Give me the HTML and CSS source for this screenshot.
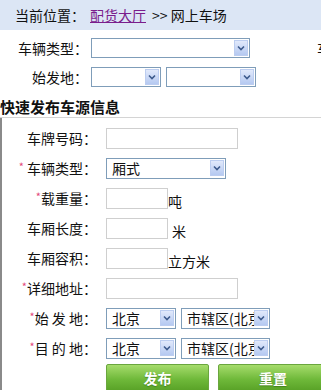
FILE: index.html
```html
<!DOCTYPE html>
<html lang="zh-CN">
<head>
  <meta charset="UTF-8" />
  <meta name="viewport" content="width=device-width, initial-scale=1" />
  <title>网上车场</title>
  <link rel="stylesheet" href="styles.css">
</head>
<body>

  <div class="crumb">
    当前位置：<a href="#">配货大厅</a><span class="sep">&gt;&gt; 网上车场</span>
  </div>

  <!-- 搜索条件 -->
  <div class="search">
    <div class="srow">
      <span class="slabel">车辆类型：</span>
      <div class="sel w159"><span class="val"></span><span class="arr"><svg viewBox="0 0 8 6" width="8" height="6"><path d="M1 1.5 L4 4.5 L7 1.5" fill="none" stroke="#3d5a8c" stroke-width="1.6"/></svg></span></div>
      <span class="slabel more">车长：</span>
    </div>
    <div class="srow">
      <span class="slabel">始发地：</span>
      <div class="sel w70"><span class="val"></span><span class="arr"><svg viewBox="0 0 8 6" width="8" height="6"><path d="M1 1.5 L4 4.5 L7 1.5" fill="none" stroke="#3d5a8c" stroke-width="1.6"/></svg></span></div>
      <div class="sel w90"><span class="val"></span><span class="arr"><svg viewBox="0 0 8 6" width="8" height="6"><path d="M1 1.5 L4 4.5 L7 1.5" fill="none" stroke="#3d5a8c" stroke-width="1.6"/></svg></span></div>
    </div>
  </div>

  <h2 class="title">快速发布车源信息</h2>

  <form class="publish">
    <div class="row">
      <label>车牌号码：</label>
      <input class="txt long" type="text" />
    </div>
    <div class="row">
      <label><i>*</i> 车辆类型：</label>
      <div class="sel w120"><span class="val">厢式</span><span class="arr"><svg viewBox="0 0 8 6" width="8" height="6"><path d="M1 1.5 L4 4.5 L7 1.5" fill="none" stroke="#3d5a8c" stroke-width="1.6"/></svg></span></div>
    </div>
    <div class="row">
      <label><i>*</i>载重量：</label>
      <input class="txt short" type="text" /><span class="unit">吨</span>
    </div>
    <div class="row">
      <label>车厢长度：</label>
      <input class="txt short" type="text" /><span class="unit gap">米</span>
    </div>
    <div class="row">
      <label>车厢容积：</label>
      <input class="txt short" type="text" /><span class="unit">立方米</span>
    </div>
    <div class="row">
      <label><i>*</i>详细地址：</label>
      <input class="txt long" type="text" />
    </div>
    <div class="row">
      <label><i>*</i>始 发 地：</label>
      <div class="sel w70"><span class="val">北京</span><span class="arr"><svg viewBox="0 0 8 6" width="8" height="6"><path d="M1 1.5 L4 4.5 L7 1.5" fill="none" stroke="#3d5a8c" stroke-width="1.6"/></svg></span></div>
      <div class="sel w89"><span class="val">市辖区(北京)</span><span class="arr"><svg viewBox="0 0 8 6" width="8" height="6"><path d="M1 1.5 L4 4.5 L7 1.5" fill="none" stroke="#3d5a8c" stroke-width="1.6"/></svg></span></div>
    </div>
    <div class="row">
      <label><i>*</i>目 的 地：</label>
      <div class="sel w70"><span class="val">北京</span><span class="arr"><svg viewBox="0 0 8 6" width="8" height="6"><path d="M1 1.5 L4 4.5 L7 1.5" fill="none" stroke="#3d5a8c" stroke-width="1.6"/></svg></span></div>
      <div class="sel w89"><span class="val">市辖区(北京)</span><span class="arr"><svg viewBox="0 0 8 6" width="8" height="6"><path d="M1 1.5 L4 4.5 L7 1.5" fill="none" stroke="#3d5a8c" stroke-width="1.6"/></svg></span></div>
    </div>
    <div class="btns">
      <button type="button" class="gbtn">发布</button>
      <button type="reset" class="gbtn wide">重置</button>
    </div>
  </form>

</body>
</html>
```

FILE: styles.css
```css
body {
  margin: 0;
  background: #fff;
  color: #111;
  font-family: "Noto Sans CJK SC", "Noto Sans", sans-serif;
  font-size: 13px;
  width: 321px;
  height: 390px;
  overflow: hidden;
}

.crumb {
  height: 30px;
  line-height: 30px;
  padding-left: 15px;
  background: #dce6f5;
  font-size: 14px;
  white-space: nowrap;
}

.crumb a {
  color: #7a1d8c;
  margin-left: 5px;
}

.sep {
  margin-left: 6px;
}

.search {
  padding-top: 8px;
}

.srow {
  display: flex;
  align-items: center;
  height: 20px;
  margin-bottom: 9px;
  white-space: nowrap;
}

.slabel {
  width: 88px;
  flex: none;
  text-align: right;
  margin-right: 3px;
  font-size: 14px;
}

.slabel.more {
  width: auto;
  margin-left: 62px;
  text-align: left;
}

/* 仿下拉框 */
.sel {
  flex: none;
  display: flex;
  align-items: center;
  height: 20px;
  box-sizing: border-box;
  border: 1px solid #7f9db9;
  background: #fff;
  padding: 1px;
  margin-right: 5px;
  overflow: hidden;
}

.sel .val {
  flex: 1;
  min-width: 0;
  overflow: hidden;
  white-space: nowrap;
  padding-left: 4px;
  font-size: 14px;
  line-height: 19px;
}

.sel .arr {
  flex: none;
  width: 14px;
  height: 16px;
  display: flex;
  align-items: center;
  justify-content: center;
  box-sizing: border-box;
  border: 1px solid #bccdf0;
  background: linear-gradient(#e1e9fb, #b5c9f1);
}

.w159 { width: 159px; }
.w120 { width: 120px; height: 21px; }
.w90 { width: 90px; }
.w89 { width: 89px; height: 21px; }
.w70 { width: 70px; }

.row .w70 { height: 21px; }

.title {
  margin: 0;
  font-size: 15px;
  line-height: 21px;
  font-weight: bold;
  border-bottom: 1px solid #d4d4d4;
  white-space: nowrap;
}

.publish {
  border-left: 2px solid #8a8a8a;
  padding-top: 5px;
}

.row {
  display: flex;
  align-items: center;
  height: 30px;
  white-space: nowrap;
}

.row label {
  width: 95px;
  flex: none;
  text-align: right;
  margin-right: 9px;
  font-size: 14px;
}

.row label i {
  font-style: normal;
  color: #e2487a;
  font-size: 11px;
  vertical-align: 3px;
}

.txt {
  box-sizing: border-box;
  height: 21px;
  border: 1px solid #cfcfcf;
  padding: 0 3px;
  margin: 0;
  font-family: inherit;
  font-size: 13px;
}

.txt.long { width: 132px; }
.txt.short { width: 62px; }

.unit {
  font-size: 14px;
  margin-top: 5px;
}

.unit.gap {
  margin-left: 4px;
}

.btns {
  display: flex;
  gap: 9px;
  padding-left: 104px;
  padding-top: 1px;
  white-space: nowrap;
}

.gbtn {
  flex: none;
  width: 103px;
  height: 28px;
  border: 1px solid #6aa63e;
  border-radius: 2px;
  background: linear-gradient(#a6dc6c, #6fb93a 55%, #58a126);
  color: #fff;
  font-family: inherit;
  font-size: 14px;
  font-weight: bold;
  text-shadow: 0 1px 1px rgba(40, 90, 10, 0.5);
  cursor: pointer;
}

.gbtn.wide {
  width: 110px;
}
```
